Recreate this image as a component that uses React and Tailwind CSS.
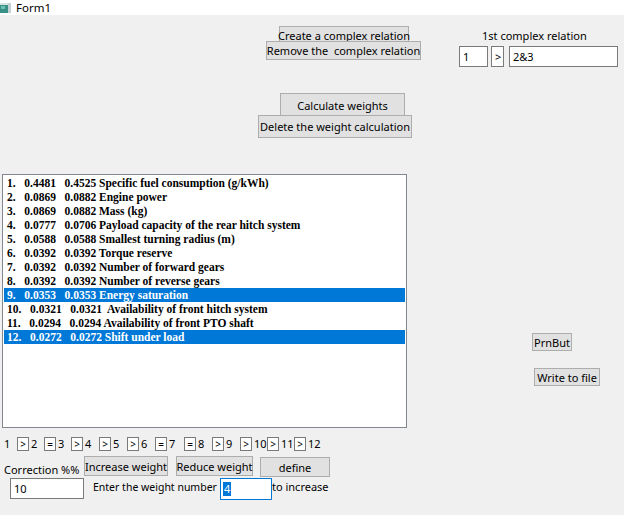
import React from "react";

const ui = { fontFamily: '"Noto Sans", "Open Sans", sans-serif' };
const serif = { fontFamily: '"Liberation Serif", "Times New Roman", serif' };

const rows = [
  ["1.   0.4481   0.4525 Specific fuel consumption (g/kWh)", false],
  ["2.   0.0869   0.0882 Engine power", false],
  ["3.   0.0869   0.0882 Mass (kg)", false],
  ["4.   0.0777   0.0706 Payload capacity of the rear hitch system", false],
  ["5.   0.0588   0.0588 Smallest turning radius (m)", false],
  ["6.   0.0392   0.0392 Torque reserve", false],
  ["7.   0.0392   0.0392 Number of forward gears", false],
  ["8.   0.0392   0.0392 Number of reverse gears", false],
  ["9.   0.0353   0.0353 Energy saturation", true],
  ["10.   0.0321   0.0321  Availability of front hitch system", false],
  ["11.   0.0294   0.0294 Availability of front PTO shaft", false],
  ["12.   0.0272   0.0272 Shift under load", true],
];

// order chain below the list: label, then the sign box that follows it
const chain = [
  ["1", ">", 13], ["2", "=", 13], ["3", ">", 13], ["4", ">", 14], ["5", ">", 14],
  ["6", "=", 14], ["7", "=", 15], ["8", ">", 14], ["9", ">", 14], ["10", ">", 13],
  ["11", ">", 13], ["12", null, 14],
];

const Btn = ({ children, className = "" }) => (
  <div
    className={
      "flex items-center justify-center bg-[#e1e1e1] border border-[#adadad] text-[11px] text-black leading-none whitespace-nowrap " +
      className
    }
  >
    {children}
  </div>
);

const Box = ({ children, className = "" }) => (
  <div
    className={
      "flex items-center bg-white border border-[#7a7a7a] text-[11px] text-black pl-[3px] leading-none " +
      className
    }
  >
    {children}
  </div>
);

export default function App() {
  return (
    <div className="w-[624px] h-[515px] overflow-hidden bg-[#f0f0f0] text-black" style={ui}>
      {/* title bar */}
      <div className="h-[15px] bg-white flex items-center">
        <svg width="11" height="10" viewBox="0 0 11 10" className="mt-[1px]">
          <rect x="0" y="0" width="11" height="10" fill="#d8e4e4" />
          <rect x="0" y="2" width="8" height="8" fill="#3a8f86" />
          <rect x="1" y="3" width="4" height="3" fill="#6cc0b2" />
          <rect x="8" y="0" width="3" height="10" fill="#c4d0d4" />
        </svg>
        <span className="ml-[5px] text-[11.5px] leading-none mt-[1px]">Form1</span>
      </div>

      {/* top area */}
      <div className="h-[159px] flex">
        <div className="ml-[258px] w-[164px] flex flex-col items-start">
          <Btn className="ml-[21px] mt-[11px] w-[130px] h-[16px] border-b-0 pt-[2px]">Create a complex relation</Btn>
          <Btn className="ml-[8px] -mt-[1px] w-[155px] h-[19px]">Remove the&nbsp; complex relation</Btn>
          <Btn className="ml-[22px] mt-[33px] w-[125px] h-[23px] border-b-0">Calculate weights</Btn>
          <Btn className="-mt-[1px] w-[154px] h-[23px]">Delete the weight calculation</Btn>
        </div>
        <div className="ml-[37px] flex flex-col">
          <div className="mt-[13px] h-[16px] pl-[23px] text-[11px] leading-[16px] whitespace-nowrap">1st complex relation</div>
          <div className="mt-[2px] flex">
            <Box className="w-[29px] h-[21px]">1</Box>
            <Box className="ml-[3px] w-[13px] h-[21px] pl-[2px]">&gt;</Box>
            <Box className="ml-[5px] w-[109px] h-[21px]">2&amp;3</Box>
          </div>
        </div>
      </div>

      {/* list + side buttons */}
      <div className="flex h-[254px]">
        <div className="ml-[2px] w-[405px] h-[254px] bg-white border border-[#828790] pt-[1px] px-[1px]" style={serif}>
          {rows.map(([t, sel], i) => (
            <div
              key={i}
              className={
                "h-[14px] leading-[14px] text-[11.5px] font-bold whitespace-pre pl-[3px] " +
                (sel ? "bg-[#0078d7] text-white" : "text-black")
              }
            >
              {t}
            </div>
          ))}
        </div>
        <div className="flex flex-col items-start ml-[125px]">
          <Btn className="mt-[159px] w-[40px] h-[18px]">PrnBut</Btn>
          <Btn className="mt-[17px] ml-[2px] w-[66px] h-[18px]">Write to file</Btn>
        </div>
      </div>

      {/* order chain */}
      <div className="mt-[9px] ml-[4px] flex h-[14px] items-center text-[11px]">
        {chain.map(([n, s, w], i) => (
          <React.Fragment key={i}>
            <span className="leading-none -mt-[1px]" style={{ width: w }}>{n}</span>
            {s && (
              <div className="w-[12px] h-[14px] mr-[2px] bg-white border border-[#7a7a7a] flex items-center justify-center text-[10px] leading-none">
                {s}
              </div>
            )}
          </React.Fragment>
        ))}
      </div>

      {/* correction row */}
      <div className="mt-[5px] flex items-start h-[22px]">
        <div className="ml-[4px] w-[80px] mt-[6px] text-[11px] leading-[16px] whitespace-nowrap">Correction %%</div>
        <Btn className="w-[84px] h-[20px]">Increase weight</Btn>
        <Btn className="ml-[8px] w-[77px] h-[20px]">Reduce weight</Btn>
        <Btn className="ml-[7px] w-[70px] h-[20px] mt-[1px]">define</Btn>
      </div>
      <div className="flex items-start">
        <Box className="ml-[10px] w-[74px] h-[21px]">10</Box>
        <div className="ml-[9px] w-[127px] text-[10.5px] leading-[16px] whitespace-nowrap mt-[1px]">Enter the weight number</div>
        <div className="w-[52px] h-[22px] bg-white border border-[#0078d7] flex items-center pl-[2px]">
          <span className="bg-[#0078d7] text-white text-[11px] leading-[14px] px-[1px]">4</span>
        </div>
        <div className="text-[11px] leading-[16px] whitespace-nowrap mt-[1px]">to increase</div>
      </div>
    </div>
  );
}
